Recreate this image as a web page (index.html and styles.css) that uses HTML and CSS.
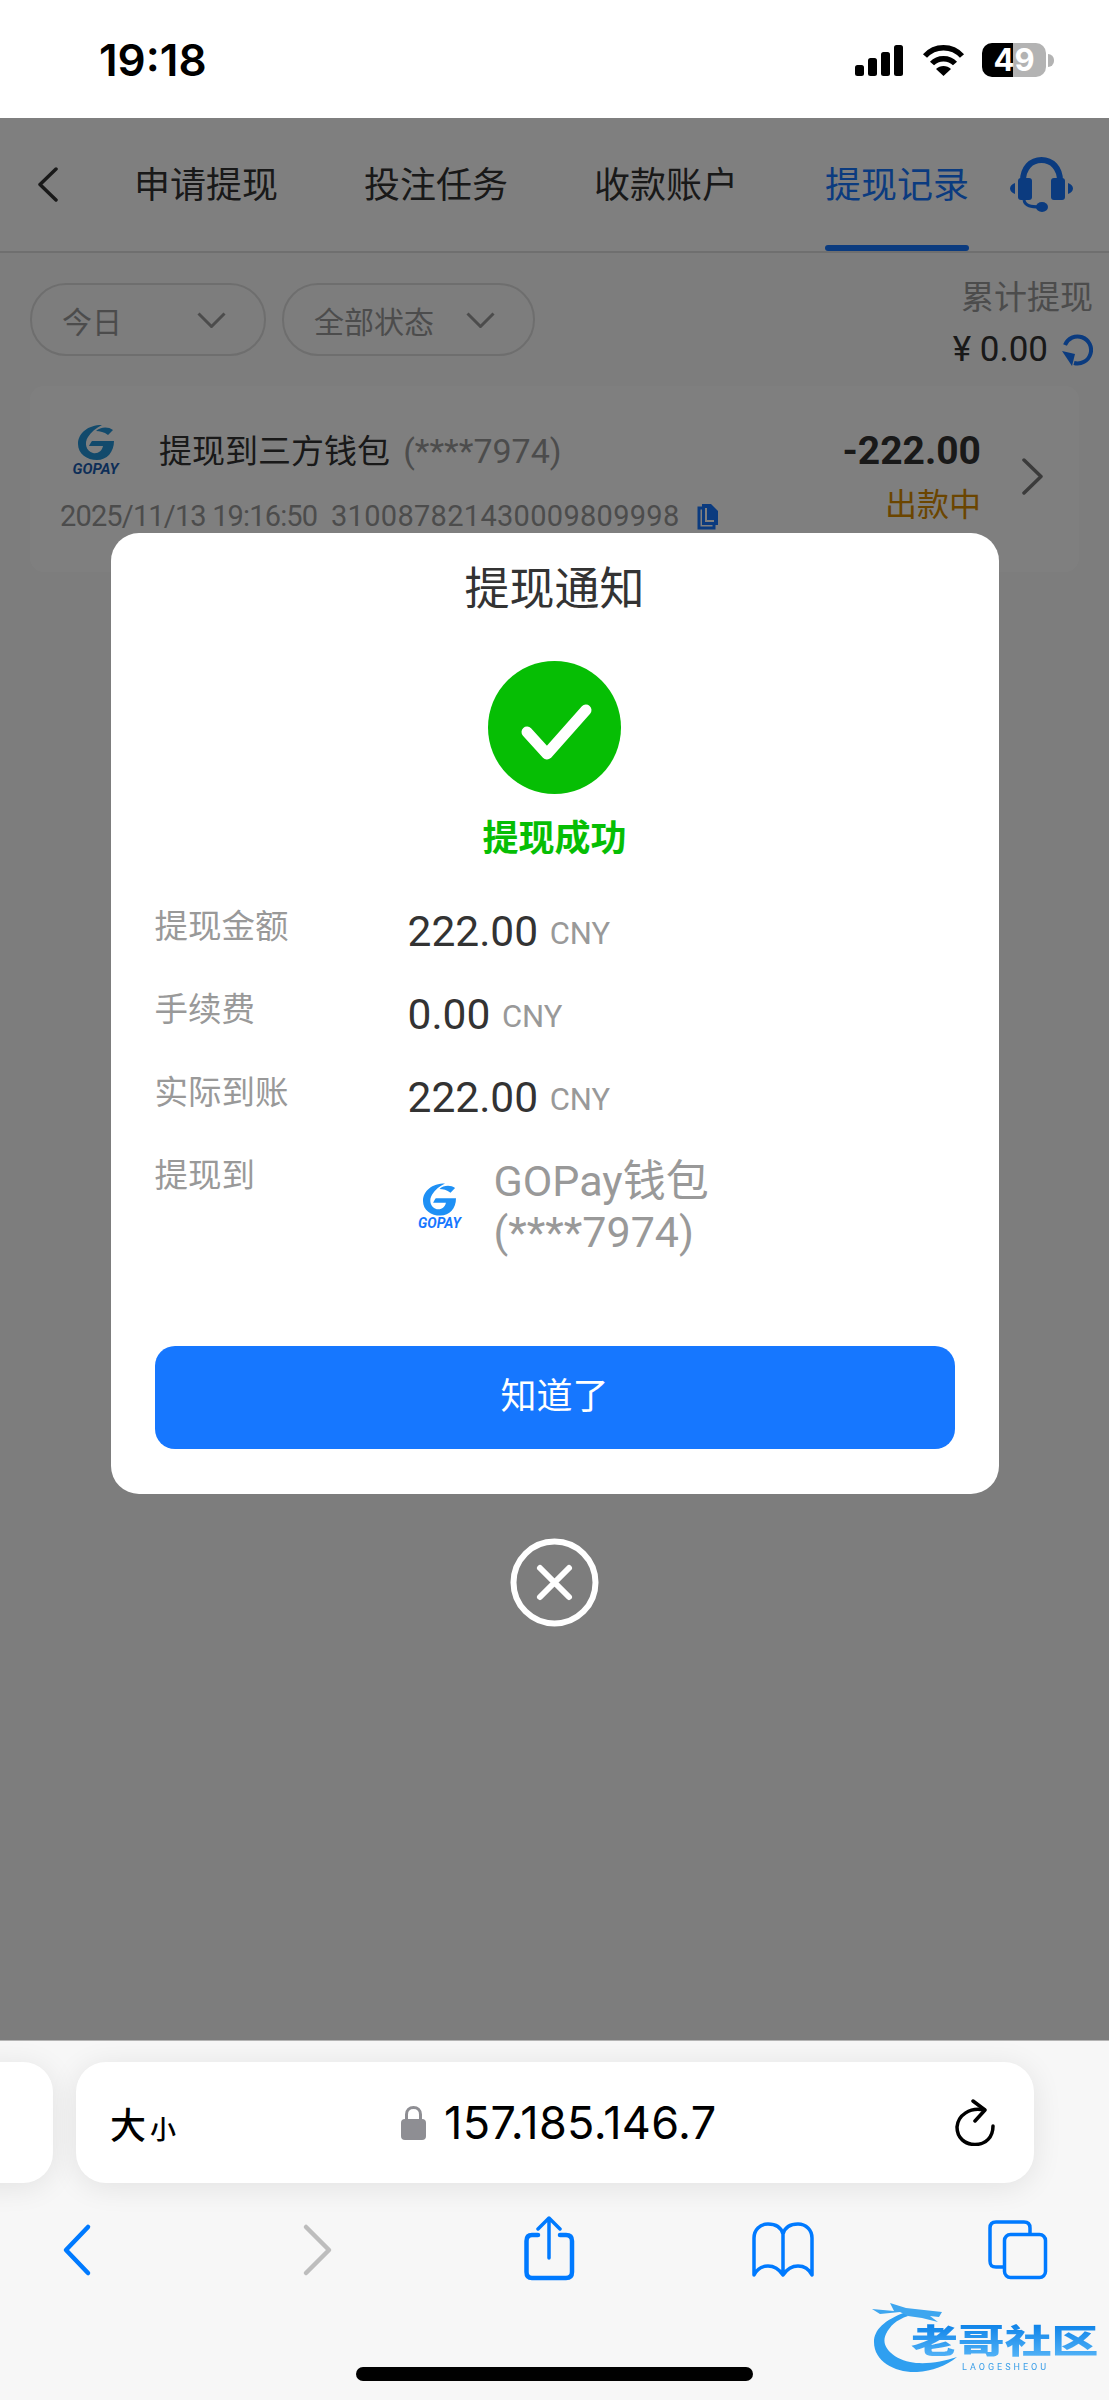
FILE: index.html
```html
<!DOCTYPE html>
<html lang="zh-CN">
  <head>
    <meta charset="UTF-8" />
    <meta name="viewport" content="width=device-width, initial-scale=1.0" />
    <title>提现记录</title>
    <link rel="stylesheet" href="styles.css">
  </head>

  <body>
    <div class="status">
      <span class="time">19:18</span>
      <svg class="signal" width="48" height="31" viewBox="0 0 48 31">
        <rect x="0" y="20" width="9" height="11" rx="2.5" />
        <rect x="13" y="13" width="9" height="18" rx="2.5" />
        <rect x="26" y="7" width="9" height="24" rx="2.5" />
        <rect x="39" y="0" width="9" height="31" rx="2.5" />
      </svg>
      <svg class="wifi" width="43" height="32" viewBox="0 0 43 32">
        <path d="M3 12C13 1 30 1 40 12" fill="none" stroke="#000" stroke-width="5.5" />
        <path d="M10 19.5C16 13 27 13 33 19.5" fill="none" stroke="#000" stroke-width="5.5" />
        <path d="M14 25C18 21 25 21 29 25L21.500 32Z" />
      </svg>
      <div class="battery">49</div>
      <i class="battery-cap"></i>
    </div>

    <div class="page">
      <div class="nav">
        <svg class="nav-back" width="21" height="35" viewBox="0 0 21 35">
          <path d="M19 2L3 17.500L19 33" fill="none" stroke="#333" stroke-width="3.500" stroke-linecap="round" stroke-linejoin="round" />
        </svg>
        <div class="tab"><span>申请提现</span><i></i></div>
        <div class="tab"><span>投注任务</span><i></i></div>
        <div class="tab"><span>收款账户</span><i></i></div>
        <div class="tab active"><span>提现记录</span><i></i></div>
        <svg class="headset" width="63" height="55" viewBox="0 0 63 55">
          <path d="M13 27V24C13 11 21 3 31.500 3C42 3 50 11 50 24V27" fill="none" stroke="#1677ff" stroke-width="6" />
          <rect x="8" y="21" width="14" height="22" rx="3" />
          <rect x="41" y="21" width="14" height="22" rx="3" />
          <path d="M5 26C2 27 0 29 0 31.500C0 34 2 36 5 37Z" />
          <path d="M58 26C61 27 63 29 63 31.500C63 34 61 36 58 37Z" />
          <path d="M14 43C15 49 21 50 30 50" fill="none" stroke="#1677ff" stroke-width="3" />
          <ellipse cx="32" cy="50" rx="6" ry="5" />
        </svg>
      </div>

      <div class="filters">
        <div class="pill pill-day">
          <span>今日</span>
          <svg width="29" height="16" viewBox="0 0 29 16"><path d="M1.500 1.500L14.500 14.500L27.500 1.500" /></svg>
        </div>
        <div class="pill pill-state">
          <span>全部状态</span>
          <svg width="29" height="16" viewBox="0 0 29 16"><path d="M1.500 1.500L14.500 14.500L27.500 1.500" /></svg>
        </div>
        <div class="summary">
          <div class="summary-label">累计提现</div>
          <div class="summary-amount">
            <span>¥ 0.00</span>
            <svg width="32" height="32" viewBox="0 0 32 32">
              <path d="M4 11A13.500 13.500 0 1 1 13 29" fill="none" stroke="#1677ff" stroke-width="4" />
              <path d="M1 17L14 20L11 32Z" fill="#1677ff" />
            </svg>
          </div>
        </div>
      </div>

      <div class="card">
        <div class="card-main">
          <div class="card-head">
            <div class="gopay">
              <svg class="g-mark" width="36" height="35" viewBox="0 0 36 35">
                <path d="M24 0C10 0 0 8 0 19C0 29 9 35 19 35C29 35 36 27 36 16H14C13 17 12 19 11 21H25C24 26 20 29 15 28C8 26 6 18 10 12C13 7 18 3 24 0Z" />
                <path d="M18 6C22 2 30 1 35 5L30 10C26 7 22 6 18 6Z" />
              </svg>
              <span>GOPAY</span>
            </div>
            <div class="card-title">提现到三方钱包 <em>(****7974)</em></div>
          </div>
          <div class="card-meta">
            <span class="card-date">2025/11/13 19:16:50</span>
            <span class="card-no">310087821430009809998</span>
            <svg width="22" height="27" viewBox="0 0 22 27">
              <path d="M5 5H2V25H17V22" fill="none" stroke="#1677ff" stroke-width="3" />
              <path d="M5 1H14L21 8V22H5Z" fill="#1677ff" />
              <path d="M9 5V18H17" fill="none" stroke="#fff" stroke-width="2" />
            </svg>
          </div>
        </div>
        <div class="card-side">
          <div class="card-amount">-222.00</div>
          <div class="card-state">出款中</div>
        </div>
        <svg class="card-arrow" width="23" height="37" viewBox="0 0 23 37">
          <path d="M3 2L20 18.500L3 35" fill="none" stroke="#777" stroke-width="3.500" stroke-linecap="round" stroke-linejoin="round" />
        </svg>
      </div>

      <div class="mask">
        <div class="modal">
          <div class="modal-title">提现通知</div>
          <svg class="modal-icon" width="133" height="133" viewBox="0 0 133 133">
            <circle cx="66.500" cy="66.500" r="66.500" fill="#06be04" />
            <path d="M39 71L59 93L98 49" fill="none" stroke="#fff" stroke-width="11" stroke-linecap="round" stroke-linejoin="round" />
          </svg>
          <div class="modal-result">提现成功</div>

          <div class="rows">
            <div class="row">
              <div class="row-label">提现金额</div>
              <div class="row-value">222.00 <small>CNY</small></div>
            </div>
            <div class="row">
              <div class="row-label">手续费</div>
              <div class="row-value">0.00 <small>CNY</small></div>
            </div>
            <div class="row">
              <div class="row-label">实际到账</div>
              <div class="row-value">222.00 <small>CNY</small></div>
            </div>
            <div class="row row-wallet">
              <div class="row-label">提现到</div>
              <div class="gopay gopay-small">
                <svg class="g-mark" width="33" height="33" viewBox="0 0 36 35">
                  <path d="M24 0C10 0 0 8 0 19C0 29 9 35 19 35C29 35 36 27 36 16H14C13 17 12 19 11 21H25C24 26 20 29 15 28C8 26 6 18 10 12C13 7 18 3 24 0Z" />
                  <path d="M18 6C22 2 30 1 35 5L30 10C26 7 22 6 18 6Z" />
                </svg>
                <span>GOPAY</span>
              </div>
              <div class="wallet-name">GOPay钱包<br />(****7974)</div>
            </div>
          </div>

          <div class="modal-btn">知道了</div>
        </div>
        <svg class="modal-close" width="89" height="89" viewBox="0 0 89 89">
          <circle cx="44.500" cy="44.500" r="41" fill="none" stroke="#fff" stroke-width="6" />
          <path d="M30 30L59 59M59 30L30 59" fill="none" stroke="#fff" stroke-width="6" stroke-linecap="round" />
        </svg>
      </div>
    </div>

    <div class="toolbar">
      <div class="address-row">
        <div class="address-prev"></div>
        <div class="address">
          <div class="font-size">大<small>小</small></div>
          <div class="url">
            <svg width="25" height="34" viewBox="0 0 25 34">
              <path d="M5.500 15V8.500C5.500 4 8.500 1.500 12.500 1.500C16.500 1.500 19.500 4 19.500 8.500V15" fill="none" stroke="#8e8e93" stroke-width="3" />
              <rect x="0" y="13" width="25" height="21" rx="4" fill="#8e8e93" />
            </svg>
            <span>157.185.146.7</span>
          </div>
          <svg class="reload" width="40" height="47" viewBox="0 0 40 47">
            <path d="M29 11C15 8 3 16 2 28C2 39 10 45.500 20 45.500C31 45.500 38 38 38 27" fill="none" stroke="#000" stroke-width="3.500" stroke-linecap="round" />
            <path d="M18 2L30 11L20 22" fill="none" stroke="#000" stroke-width="3.500" stroke-linecap="round" stroke-linejoin="round" />
          </svg>
        </div>
      </div>

      <div class="tools">
        <svg width="64" height="66" viewBox="0 0 64 66"><path d="M43 11L21 34L43 57" stroke="#007aff" /></svg>
        <svg width="64" height="66" viewBox="0 0 64 66"><path d="M21 11L44 34L21 57" stroke="#bdbdbd" /></svg>
        <svg width="64" height="66" viewBox="0 0 64 66">
          <path d="M21 19H15C11 19 9.500 21 9.500 25V56C9.500 60 11 62 15 62H49C53 62 55 60 55 56V25C55 21 53 19 49 19H43" stroke="#007aff" />
          <path d="M32 2V42M21 13L32 2L43 13" stroke="#007aff" stroke-width="3.500" />
        </svg>
        <svg width="64" height="66" viewBox="0 0 64 66">
          <path d="M32 18C30 11 24 8 17 8C9 8 3 14 3 22V59C6 53 11 50 17 50C23 50 28 53 32 59C36 53 41 50 47 50C53 50 58 53 61 59V22C61 14 55 8 47 8C40 8 34 11 32 18V59" stroke="#007aff" stroke-width="3.500" />
        </svg>
        <svg width="64" height="66" viewBox="0 0 64 66">
          <path d="M18 51H11C6 51 5 49 5 45V12C5 8 7 6 11 6H39C43 6 45 8 45 12V18" stroke="#007aff" stroke-width="3.500" />
          <rect x="19.500" y="18.500" width="41" height="43" rx="6" stroke="#007aff" stroke-width="3.500" />
        </svg>
      </div>

      <div class="home-bar"></div>

      <div class="watermark">
        <svg width="130" height="75" viewBox="0 0 130 75">
          <path d="M34 12C12 20 2 30 2 42C2 62 24 73 45 72C60 71 74 66 85 57C70 62 52 65 38 62C20 58 8 46 14 34C18 26 24 20 36 16Z" fill="#2f9ff0" />
          <path d="M0 9L22 11L18 3L34 8L70 12L67 17L58 16L66 22L50 18L36 16L28 12L8 14Z" fill="#3ea6ef" />
        </svg>
        <div class="watermark-cn">老哥社区</div>
        <div class="watermark-en">LAOGESHEOU</div>
      </div>
    </div>
  </body>
</html>
```

FILE: styles.css
```css
* {
  box-sizing: border-box;
}
html,
body {
  margin: 0;
  padding: 0;
}
body {
  width: 1109px;
  height: 2400px;
  overflow: hidden;
  display: flex;
  flex-direction: column;
  background: #fff;
  font-family: Roboto, "Noto Sans CJK SC", sans-serif;
}
em,
small,
i {
  font-style: normal;
}

/* status bar */
.status {
  height: 118px;
  flex: none;
  display: flex;
  align-items: center;
  padding: 2px 0 0 99px;
  background: #fff;
}
.time {
  width: 756px;
  font-family: Inter, sans-serif;
  font-size: 44px;
  font-weight: 600;
  color: #000;
}
.wifi {
  margin-left: 19px;
}
.battery {
  width: 64px;
  height: 34px;
  margin-left: 17px;
  border-radius: 10px;
  background: linear-gradient(to right, #000 48%, #b3b3b3 48%);
  color: #fff;
  font-family: Inter, sans-serif;
  font-size: 31px;
  font-weight: 700;
  line-height: 34px;
  text-align: center;
}
.battery-cap {
  width: 6px;
  height: 13px;
  margin-left: 2px;
  border-radius: 0 6px 6px 0;
  background: #b3b3b3;
}

/* page under the mask */
.page {
  height: 1922px;
  flex: none;
  position: relative;
  background: #fafafa;
}
.nav {
  height: 135px;
  display: flex;
  align-items: stretch;
  border-bottom: 2px solid #dedede;
  background: #fff;
}
.nav-back {
  margin: 49px 76px 0 37px;
}
.tab {
  width: 144px;
  margin-right: 86px;
  display: flex;
  flex-direction: column;
  color: #333;
  font-size: 36px;
}
.tab span {
  flex: 1;
  display: flex;
  align-items: center;
  justify-content: center;
}
.tab i {
  height: 6px;
  border-radius: 3px;
}
.tab.active {
  color: #1677ff;
  margin: 0 41px 0 1px;
}
.tab.active i {
  background: #1677ff;
}
.headset {
  margin-top: 39px;
  fill: #1677ff;
}

.filters {
  height: 133px;
  display: flex;
  align-items: flex-start;
  padding: 30px 16px 0 30px;
}
.pill {
  height: 73px;
  display: flex;
  align-items: center;
  justify-content: space-between;
  border: 2px solid #dcdcdc;
  border-radius: 36px;
  color: #999;
  font-size: 30px;
}
.pill svg {
  fill: none;
  stroke: #999;
  stroke-width: 3;
}
.pill-day {
  width: 236px;
  padding: 0 38px 0 30px;
}
.pill-state {
  width: 253px;
  margin-left: 16px;
  padding: 0 38px 0 30px;
}
.summary {
  margin: -8px 0 0 auto;
  text-align: right;
}
.summary-label {
  height: 54px;
  color: #999;
  font-size: 33px;
  line-height: 46px;
}
.summary-amount {
  display: flex;
  align-items: center;
  gap: 13px;
  color: #333;
  font-size: 35px;
}

.card {
  height: 186px;
  margin: 0 30px;
  display: flex;
  border-radius: 14px;
  background: #fff;
}
.card-main {
  flex: 1;
  padding: 39px 0 0 30px;
}
.card-head {
  display: flex;
  align-items: center;
}
.gopay {
  width: 49px;
  margin-left: 11px;
  display: flex;
  flex-direction: column;
  align-items: center;
  color: #1a5cb0;
  font-size: 15px;
  font-style: italic;
  font-weight: 700;
  line-height: 18px;
}
.g-mark {
  fill: #2494d8;
}
.card-title {
  margin: -6px 0 0 39px;
  color: #333;
  font-size: 33px;
}
.card-title em {
  margin-left: 5px;
  color: #999;
  font-size: 34px;
}
.card-meta {
  margin-top: 21px;
  display: flex;
  align-items: center;
  color: #999;
  font-size: 29px;
}
.card-date {
  width: 271px;
  letter-spacing: -0.85px;
}
.card-no {
  width: 366px;
  letter-spacing: 0.3px;
}
.card-side {
  width: 200px;
  padding: 42px 0 0;
  text-align: right;
}
.card-amount {
  height: 51px;
  color: #333;
  font-size: 39px;
  font-weight: 700;
}
.card-state {
  color: #d68b00;
  font-size: 32px;
}
.card-arrow {
  margin: 72px 35px 0 40px;
}

/* popup */
.mask {
  position: absolute;
  inset: 0;
  padding-top: 415px;
  display: flex;
  flex-direction: column;
  align-items: center;
  background: rgba(0, 0, 0, 0.5);
}
.modal {
  width: 888px;
  padding: 27px 44px 45px;
  display: flex;
  flex-direction: column;
  align-items: center;
  border-radius: 28px;
  background: #fff;
}
.modal-title {
  height: 60px;
  color: #333;
  font-size: 45px;
  line-height: 60px;
}
.modal-icon {
  margin-top: 41px;
}
.modal-result {
  height: 50px;
  margin-top: 20px;
  color: #06be04;
  font-size: 36px;
  font-weight: 700;
  line-height: 50px;
}
.rows {
  width: 100%;
  margin-top: 38px;
}
.row {
  height: 83px;
  display: flex;
}
.row-label {
  width: 253px;
  color: #999;
  font-size: 33.500px;
  line-height: 50px;
}
.row-value {
  padding-top: 5px;
  color: #333;
  font-size: 42.500px;
  line-height: 50px;
}
.row-value small {
  margin-left: 1px;
  color: #999;
  font-size: 31px;
  vertical-align: 2px;
}
.row-wallet {
  height: 195px;
}
.gopay-small {
  width: 46px;
  margin: 32px 0 0 9px;
  color: #1677ff;
  font-size: 14px;
  line-height: 15px;
}
.gopay-small .g-mark {
  fill: #1e90f5;
}
.wallet-name {
  margin: 5px 0 0 31px;
  color: #999;
  font-size: 43px;
  line-height: 51px;
}
.modal-btn {
  width: 800px;
  height: 103px;
  border-radius: 20px;
  background: #1677ff;
  color: #fff;
  font-size: 36px;
  line-height: 103px;
  text-align: center;
}
.modal-close {
  margin-top: 44px;
}

/* browser toolbar */
.toolbar {
  flex: 1;
  position: relative;
  border-top: 1px solid #b4b4b4;
  background: #f7f7f7;
}
.address-row {
  display: flex;
  gap: 23px;
  margin: 21px 0 0 -60px;
}
.address-prev,
.address {
  height: 121px;
  border-radius: 30px;
  background: #fff;
  box-shadow: 0 4px 30px rgba(0, 0, 0, 0.09);
}
.address-prev {
  width: 113px;
}
.address {
  width: 958px;
  display: flex;
  align-items: center;
  padding: 0 39px 0 34px;
}
.font-size {
  width: 291px;
  color: #000;
  font-size: 36px;
  font-weight: 500;
}
.font-size small {
  margin-left: 4px;
  font-size: 26px;
}
.url {
  flex: 1;
  display: flex;
  align-items: center;
  gap: 18px;
  color: #000;
  font-family: Inter, sans-serif;
  font-size: 45px;
  letter-spacing: 0.4px;
}
.tools {
  display: flex;
  margin-top: 33px;
  padding-left: 45px;
}
.tools svg {
  margin-left: 170px;
  fill: none;
  stroke-width: 4.500;
  stroke-linecap: round;
  stroke-linejoin: round;
}
.tools svg:nth-child(1) {
  margin-left: 0;
}
.tools svg:nth-child(2) {
  margin-left: 176px;
}
.tools svg:nth-child(3) {
  margin-left: 168px;
}
.home-bar {
  width: 397px;
  height: 14px;
  margin: 85px 0 0 356px;
  border-radius: 7px;
  background: #000;
}
.watermark {
  position: absolute;
  left: 872px;
  top: 259px;
  width: 225px;
  height: 75px;
  filter: blur(0.6px);
}
.watermark svg {
  position: absolute;
  left: 0;
  top: 0;
}
.watermark-cn {
  position: absolute;
  left: 39px;
  top: 22px;
  background: linear-gradient(to bottom, #0a80e8, #5ab8f8);
  -webkit-background-clip: text;
  background-clip: text;
  color: transparent;
  font-family: Roboto, "Noto Sans CJK SC", sans-serif;
  font-size: 33px;
  font-weight: 900;
  line-height: 39px;
  white-space: nowrap;
  transform: scaleX(1.42);
  transform-origin: left center;
}
.watermark-en {
  position: absolute;
  left: 90px;
  top: 62px;
  color: #3a9ee8;
  font-size: 9px;
  letter-spacing: 3px;
  line-height: 10px;
  white-space: nowrap;
}
```
